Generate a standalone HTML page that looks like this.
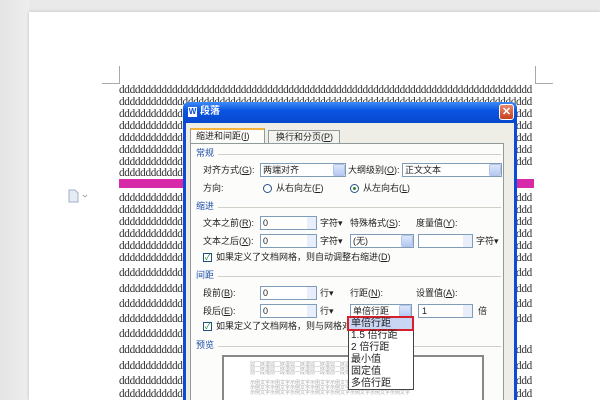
<!DOCTYPE html>
<html style="width:600px;height:400px;overflow:hidden"><head><meta charset="utf-8">
<style>
*{margin:0;padding:0;box-sizing:border-box}
html,body{width:600px;height:400px;overflow:hidden}
body{background:#e9e9e9;position:relative;font-family:"Liberation Sans","Noto Sans CJK SC",sans-serif}
.abs{position:absolute}
#page{left:29px;top:12px;width:571px;height:388px;background:#fff;box-shadow:0 0 3px #bbb}
.dl{position:absolute;left:119px;width:415px;height:12px;overflow:hidden;white-space:nowrap;font-family:"Liberation Serif",serif;font-size:11.2px;line-height:12px;color:#2e2e2e;letter-spacing:-0.3px}
#dlg{left:183px;top:102px;width:334px;height:298px;background:#0b4bd8;border-radius:6px 6px 0 0;overflow:hidden}
#title{left:0;top:0;width:334px;height:21px;background:linear-gradient(#3d8cf6,#0a55e3 40%,#0747cc);border-radius:6px 6px 0 0}
#client{left:3px;top:21px;width:328px;height:277px;background:#eeede6;overflow:hidden}
.t{position:absolute;font-size:9px;color:#222;white-space:nowrap;line-height:11px}
.hd{color:#2050a8}
.hl{position:absolute;height:1px;background:#d0d0c8}
.box{position:absolute;background:#fff;border:1px solid #7f9db9;height:14px}
.btn{position:absolute;width:12px;height:12px;background:linear-gradient(#dce6fb,#b6c9f2);border:1px solid #b4c4e8;border-radius:2px}
.sp{position:absolute;width:9px;height:12px;background:#e8eefb}
.rad{position:absolute;width:9px;height:9px;border:1px solid #2a4f8a;border-radius:50%;background:#fff}
.chk{position:absolute;width:9px;height:9px;border:1px solid #1c5180;background:#fff;font-size:8px;line-height:7px;color:#217d21;text-align:center}
</style></head><body>
<div class="abs" style="left:0;top:0;width:29px;height:400px;background:linear-gradient(90deg,#e4e4e4,#eeeeee)"></div>
<div class="abs" id="page"></div>
<div class="abs" style="left:119px;top:66px;width:1px;height:18px;background:#aaa"></div>
<div class="abs" style="left:102px;top:83px;width:18px;height:1px;background:#aaa"></div>
<div class="abs" style="left:535px;top:66px;width:1px;height:18px;background:#aaa"></div>
<div class="abs" style="left:535px;top:83px;width:18px;height:1px;background:#aaa"></div>
<div class="dl" style="top:84px">dddddddddddddddddddddddddddddddddddddddddddddddddddddddddddddddddddddddddddddd</div>
<div class="dl" style="top:96px">dddddddddddddddddddddddddddddddddddddddddddddddddddddddddddddddddddddddddddddd</div>
<div class="dl" style="top:108px">dddddddddddddddddddddddddddddddddddddddddddddddddddddddddddddddddddddddddddddd</div>
<div class="dl" style="top:120px">dddddddddddddddddddddddddddddddddddddddddddddddddddddddddddddddddddddddddddddd</div>
<div class="dl" style="top:132px">dddddddddddddddddddddddddddddddddddddddddddddddddddddddddddddddddddddddddddddd</div>
<div class="dl" style="top:144px">dddddddddddddddddddddddddddddddddddddddddddddddddddddddddddddddddddddddddddddd</div>
<div class="dl" style="top:156px">dddddddddddddddddddddddddddddddddddddddddddddddddddddddddddddddddddddddddddddd</div>
<div class="dl" style="top:167px">ddddddddddddddddddddddddddddddddddddddddddddddddddddd</div>
<div class="abs" style="left:119px;top:179px;width:415px;height:9px;background:#d62aa8"></div>
<div class="dl" style="top:192px">dddddddddddddddddddddddddddddddddddddddddddddddddddddddddddddddddddddddddddddd</div>
<div class="dl" style="top:204px">dddddddddddddddddddddddddddddddddddddddddddddddddddddddddddddddddddddddddddddd</div>
<div class="dl" style="top:216px">dddddddddddddddddddddddddddddddddddddddddddddddddddddddddddddddddddddddddddddd</div>
<div class="dl" style="top:228px">dddddddddddddddddddddddddddddddddddddddddddddddddddddddddddddddddddddddddddddd</div>
<div class="dl" style="top:240px">dddddddddddddddddddddddddddddddddddddddddddddddddddddddddddddddddddddddddddddd</div>
<div class="dl" style="top:252px">dddddddddddddddddddddddddddddddddddddddddddddddddddddddddddddddddddddddddddddd</div>
<div class="dl" style="top:267px">dddddddddddddddddddddddddddddddddddddddddddddddddddddddddddddddddddddddddddddd</div>
<div class="dl" style="top:283px">dddddddddddddddddddddddddddddddddddddddddddddddddddddddddddddddddddddddddddddd</div>
<div class="dl" style="top:298px">dddddddddddddddddddddddddddddddddddddddddddddddddddddddddddddddddddddddddddddd</div>
<div class="dl" style="top:313px">dddddddddddddddddddddddddddddddddddddddddddddddddddddddddddddddddddddddddddddd</div>
<div class="dl" style="top:328px">dddddddddddddddddddddddddddddddddddddddddddddddddddddddddddd</div>
<div class="dl" style="top:344px">dddddddddddddddddddddddddddddddddddddddddddddddddddddddddddddddddddddddddddddd</div>
<div class="dl" style="top:360px">dddddddddddddddddddddddddddddddddddddddddddddddddddddddddddddddddddddddddddddd</div>
<div class="dl" style="top:375px">dddddddddddddddddddddddddddddddddddddddddddddddddddddddddddddddddddddddddddddd</div>
<div class="dl" style="top:388px">dddddddddddddddddddddddddddddddddddddddddddddddddddddddddddddddddddddddddddddd</div>
<svg class="abs" style="left:68px;top:189px" width="22" height="14"><path d="M1 1h6l3 3v9H1z" fill="#e6ecf4" stroke="#9fb0c6"/><path d="M15 6l2 2 2-2" fill="none" stroke="#aaa"/></svg>

<div class="abs" id="dlg">
 <div class="abs" id="title">
  <div class="abs" style="left:5px;top:5px;width:9px;height:10px;background:#fff;color:#0a4ad0;font-size:8px;font-weight:bold;line-height:10px;text-align:center">W</div>
  <div class="t" style="left:17px;top:4px;color:#fff;font-weight:bold;font-size:10px;line-height:12px">段落</div>
  <div class="abs" style="left:316px;top:2px;width:15px;height:16px;background:linear-gradient(#e8876a,#c8401e);border:1px solid #fff;border-radius:3px;color:#fff;font-size:11px;font-weight:bold;text-align:center;line-height:14px">✕</div>
 </div>
 <div class="abs" id="client">
  <div class="abs" style="left:4px;top:5px;width:75px;height:16px;background:#fcfcfa;border:1px solid #919b9c;border-bottom:none;border-top:2px solid #f3b33d"></div>
  <div class="t" style="left:10px;top:8px">缩进和间距(<u>I</u>)</div>
  <div class="abs" style="left:82px;top:7px;width:72px;height:14px;background:#f3f3ef;border:1px solid #919b9c;border-bottom:none"></div>
  <div class="t" style="left:90px;top:9px">换行和分页(<u>P</u>)</div>
  <div class="abs" style="left:4px;top:20px;width:314px;height:257px;background:#fcfcfb;border:1px solid #919b9c;border-bottom:none"></div>
  <div class="t hd" style="left:10px;top:25px">常规</div>
  <div class="hl" style="left:32px;top:31px;width:283px"></div>
  <div class="t" style="left:17px;top:42px">对齐方式(<u>G</u>):</div>
  <div class="box" style="left:74px;top:40px;width:86px"><div class="t" style="left:2px;top:1px">两端对齐</div><div class="btn" style="left:72px;top:0"></div></div>
  <div class="t" style="left:162px;top:42px">大纲级别(<u>O</u>):</div>
  <div class="box" style="left:216px;top:40px;width:100px"><div class="t" style="left:2px;top:1px">正文文本</div><div class="btn" style="left:86px;top:0"></div></div>
  <div class="t" style="left:17px;top:60px">方向:</div>
  <div class="rad" style="left:77px;top:61px"></div><div class="t" style="left:90px;top:60px">从右向左(<u>F</u>)</div>
  <div class="rad" style="left:164px;top:61px"><div style="margin:2px;width:3px;height:3px;border-radius:50%;background:#2a8a2a"></div></div><div class="t" style="left:177px;top:60px">从左向右(<u>L</u>)</div>
  <div class="t hd" style="left:10px;top:78px">缩进</div>
  <div class="hl" style="left:32px;top:84px;width:283px"></div>
  <div class="t" style="left:17px;top:95px">文本之前(<u>R</u>):</div>
  <div class="box" style="left:74px;top:93px;width:57px"><div class="t" style="left:2px;top:1px">0</div><div class="sp" style="left:46px;top:0"></div></div>
  <div class="t" style="left:134px;top:95px">字符▾</div>
  <div class="t" style="left:164px;top:95px">特殊格式(<u>S</u>):</div>
  <div class="t" style="left:230px;top:95px">度量值(<u>Y</u>):</div>
  <div class="t" style="left:17px;top:113px">文本之后(<u>X</u>):</div>
  <div class="box" style="left:74px;top:111px;width:57px"><div class="t" style="left:2px;top:1px">0</div><div class="sp" style="left:46px;top:0"></div></div>
  <div class="t" style="left:134px;top:113px">字符▾</div>
  <div class="box" style="left:164px;top:111px;width:64px"><div class="t" style="left:2px;top:1px">(无)</div><div class="btn" style="left:50px;top:0"></div></div>
  <div class="box" style="left:232px;top:111px;width:55px"><div class="sp" style="left:44px;top:0"></div></div>
  <div class="t" style="left:290px;top:113px">字符▾</div>
  <div class="chk" style="left:17px;top:130px">✓</div>
  <div class="t" style="left:30px;top:129px">如果定义了文档网格，则自动调整右缩进(<u>D</u>)</div>
  <div class="t hd" style="left:10px;top:147px">间距</div>
  <div class="hl" style="left:32px;top:153px;width:283px"></div>
  <div class="t" style="left:17px;top:165px">段前(<u>B</u>):</div>
  <div class="box" style="left:74px;top:163px;width:57px"><div class="t" style="left:2px;top:1px">0</div><div class="sp" style="left:46px;top:0"></div></div>
  <div class="t" style="left:134px;top:165px">行▾</div>
  <div class="t" style="left:164px;top:165px">行距(<u>N</u>):</div>
  <div class="t" style="left:230px;top:165px">设置值(<u>A</u>):</div>
  <div class="t" style="left:17px;top:183px">段后(<u>E</u>):</div>
  <div class="box" style="left:74px;top:181px;width:57px"><div class="t" style="left:2px;top:1px">0</div><div class="sp" style="left:46px;top:0"></div></div>
  <div class="t" style="left:134px;top:183px">行▾</div>
  <div class="box" style="left:164px;top:181px;width:62px"><div class="t" style="left:2px;top:1px">单倍行距</div><div class="btn" style="left:48px;top:0"></div></div>
  <div class="box" style="left:232px;top:181px;width:55px"><div class="t" style="left:3px;top:1px">1</div><div class="sp" style="left:44px;top:0"></div></div>
  <div class="t" style="left:292px;top:183px">倍</div>
  <div class="chk" style="left:17px;top:199px">✓</div>
  <div class="t" style="left:30px;top:198px">如果定义了文档网格，则与网格对齐(W)</div>
  <div class="t hd" style="left:10px;top:217px">预览</div>
  <div class="hl" style="left:32px;top:223px;width:283px"></div>
  <div class="abs" style="left:36px;top:232px;width:262px;height:45px;background:#fff;border:2px solid #888;border-bottom:none"></div>
  <div class="abs" style="left:64px;top:238px;width:210px;height:39px;font-size:5px;line-height:5px;color:#aaa;white-space:nowrap;overflow:hidden">前一段落前一段落前一段落前一段落前一段落前一段落前一段落前一段落<br>前一段落前一段落前一段落前一段落前一段落前一段落前一段落前一段落<br>前一段落前一段落前一段落前一段落前一段落前一段落前一段落前一段落<br><br>示例文字示例文字示例文字示例文字示例文字示例文字示例文字示例文字<br>示例文字示例文字示例文字示例文字示例文字示例文字示例文字示例文字<br>示例文字示例文字示例文字示例文字示例文字示例文字示例文字示例文字</div>
  <div class="abs" style="left:162px;top:194px;width:66px;height:73px;background:#fff;border:1px solid #444"></div>
  <div class="abs" style="left:163px;top:195px;width:64px;height:12px;background:#c9d6f3"></div>
  <div class="abs" style="left:161px;top:193px;width:67px;height:15px;border:2px solid #d3222b"></div>
  <div class="t" style="left:165px;top:195px;font-size:10px">单倍行距</div>
  <div class="t" style="left:165px;top:207px;font-size:10px">1.5 倍行距</div>
  <div class="t" style="left:165px;top:219px;font-size:10px">2 倍行距</div>
  <div class="t" style="left:165px;top:231px;font-size:10px">最小值</div>
  <div class="t" style="left:165px;top:243px;font-size:10px">固定值</div>
  <div class="t" style="left:165px;top:255px;font-size:10px">多倍行距</div>
 </div>
</div>
</body></html>
